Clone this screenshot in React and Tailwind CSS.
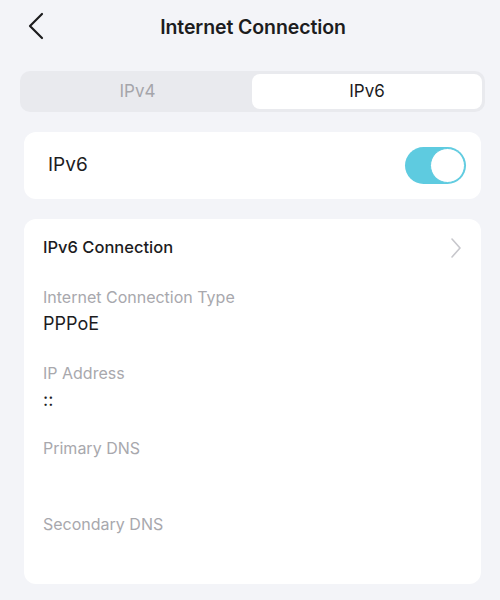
export default function App() {
  const fields = [
    { label: "Internet Connection Type", value: "PPPoE" },
    { label: "IP Address", value: "::" },
    { label: "Primary DNS", value: "" },
    { label: "Secondary DNS", value: "" },
  ];
  return (
    <div
      className="w-[500px] h-[600px] bg-[#f3f4f8] overflow-hidden text-[#1c1c1e]"
      style={{ fontFamily: "Inter, 'Noto Sans', sans-serif" }}
    >
      <div className="relative h-[52px] flex items-center justify-center pt-[3px] pl-[6px]">
        <svg
          className="absolute left-[28px] top-[12px]"
          width="16"
          height="28"
          viewBox="0 0 16 28"
          fill="none"
          stroke="#1c1c1e"
          strokeWidth="2.2"
          strokeLinecap="round"
          strokeLinejoin="round"
        >
          <path d="M14 2 L2 14 L14 26" />
        </svg>
        <div className="text-[19.5px] font-semibold tracking-[-0.1px]">Internet Connection</div>
      </div>

      <div className="ml-[20px] mr-[15px] mt-[19px] h-[41px] rounded-[10px] bg-[#e9eaee] p-[3px] flex">
        <div className="flex-1 flex items-center justify-center text-[17px] text-[#a5a5aa]">IPv4</div>
        <div className="w-[230px] rounded-[8px] bg-white flex items-center justify-center text-[17px] text-[#1c1c1e]">
          IPv6
        </div>
      </div>

      <div className="ml-[24px] mr-[19px] mt-[20px] h-[67px] rounded-[12px] bg-white flex items-center justify-between pl-[24px] pr-[15px]">
        <div className="text-[19px]">IPv6</div>
        <div className="w-[61px] h-[37px] rounded-full bg-[#5ecbe0] flex items-center justify-end p-[1px]">
          <div className="w-[35px] h-[35px] rounded-full bg-white border-[1.5px] border-[#5ecbe0]" />
        </div>
      </div>

      <div className="ml-[24px] mr-[19px] mt-[20px] h-[365px] rounded-[12px] bg-white px-[19px] pt-[17px]">
        <div className="flex items-center justify-between h-[22px]">
          <div className="text-[16.5px] font-medium">IPv6 Connection</div>
          <svg
            width="12"
            height="20"
            viewBox="0 0 12 20"
            fill="none"
            stroke="#c7c7cc"
            strokeWidth="1.6"
            strokeLinecap="round"
            strokeLinejoin="round"
            className="mt-[2px]"
          >
            <path d="M2 1 L10 10 L2 19" />
          </svg>
        </div>
        <div className="mt-[29px] flex flex-col">
          {fields.map((f) => (
            <div key={f.label} className="h-[75.5px]">
              <div className="text-[16px] leading-[20px] text-[#a8a8ad]">{f.label}</div>
              <div className="mt-[5px] text-[18px] leading-[24px] text-[#1c1c1e]">{f.value}</div>
            </div>
          ))}
        </div>
      </div>
    </div>
  );
}
